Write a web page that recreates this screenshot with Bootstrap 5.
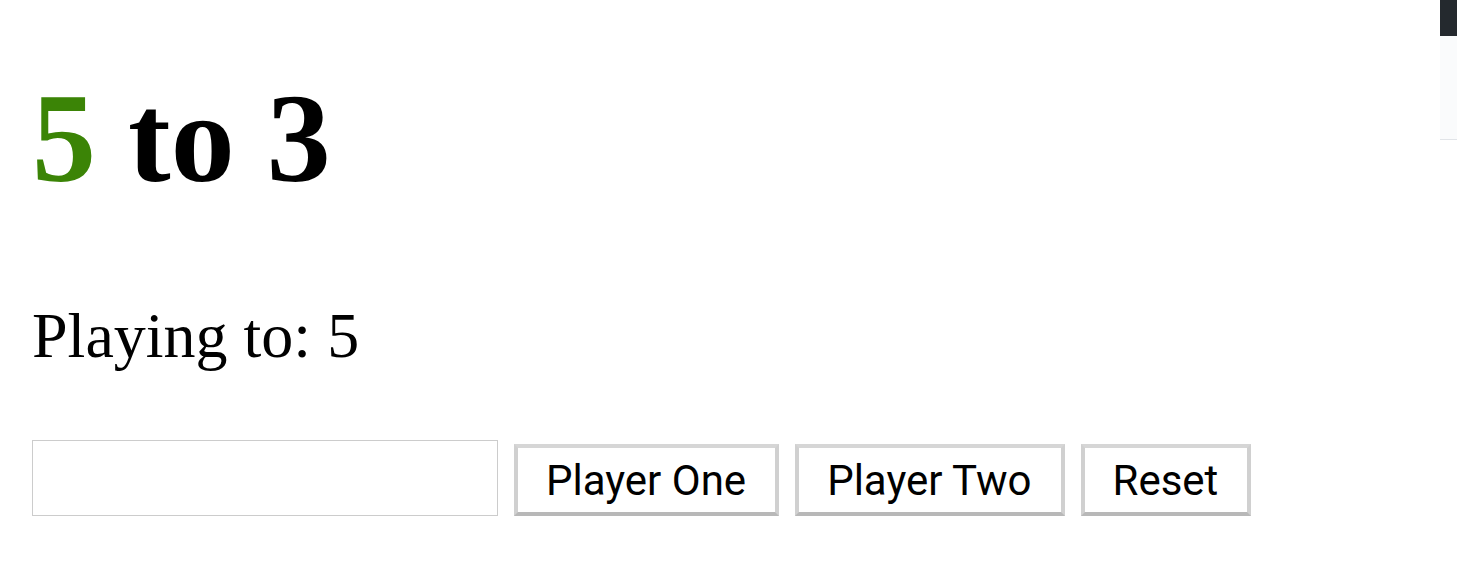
<!DOCTYPE html>
<html lang="en">
<head>
<meta charset="utf-8">
<meta name="viewport" content="width=device-width, initial-scale=1">
<title>Score Keeper</title>
<link href="https://cdn.jsdelivr.net/npm/bootstrap@5.3.0/dist/css/bootstrap.min.css" rel="stylesheet">
<style>
  body { font-family: "Liberation Serif", serif; color: #000; background: #fff; }
  .game { padding: 64px 32px 0; }
  .score { font-size: 128px; line-height: 148px; font-weight: 700; margin: 0 0 87px; }
  .winner { color: #3b8406; }
  .goal { font-size: 64px; line-height: 74px; margin: 0 0 67px; }
  .limit { width: 466px; height: 76px; border: 1px solid #ccc; border-radius: 0; background: #fff; padding: 4px 8px; font-size: 42px; }
  .play { font-family: Roboto, sans-serif; font-size: 42px; line-height: 48px; color: #000; background: #fff; border: 4px solid; border-color: #d6d6d6 #d0d0d0 #b8b8b8; border-radius: 0; padding: 9px 29px 7px 28px; }
  .edge { width: 17px; }
  .edge-top { height: 36px; background: #24292e; }
  .edge-body { height: 104px; background: #fafbfc; border-bottom: 1px solid #e1e4e8; }
</style>
</head>
<body>
<div class="d-flex align-items-start">
  <main class="game flex-grow-1">
    <h1 class="score"><span class="winner">5</span> to <span>3</span></h1>
    <p class="goal">Playing to: <span>5</span></p>
    <div class="d-flex flex-wrap align-items-end gap-3">
      <input class="limit" type="number" aria-label="Playing to">
      <button class="play" type="button">Player One</button>
      <button class="play" type="button">Player Two</button>
      <button class="play" type="button">Reset</button>
    </div>
  </main>
  <aside class="edge flex-shrink-0" aria-hidden="true">
    <div class="edge-top"></div>
    <div class="edge-body"></div>
  </aside>
</div>
<script src="https://cdn.jsdelivr.net/npm/bootstrap@5.3.0/dist/js/bootstrap.bundle.min.js"></script>
</body>
</html>
